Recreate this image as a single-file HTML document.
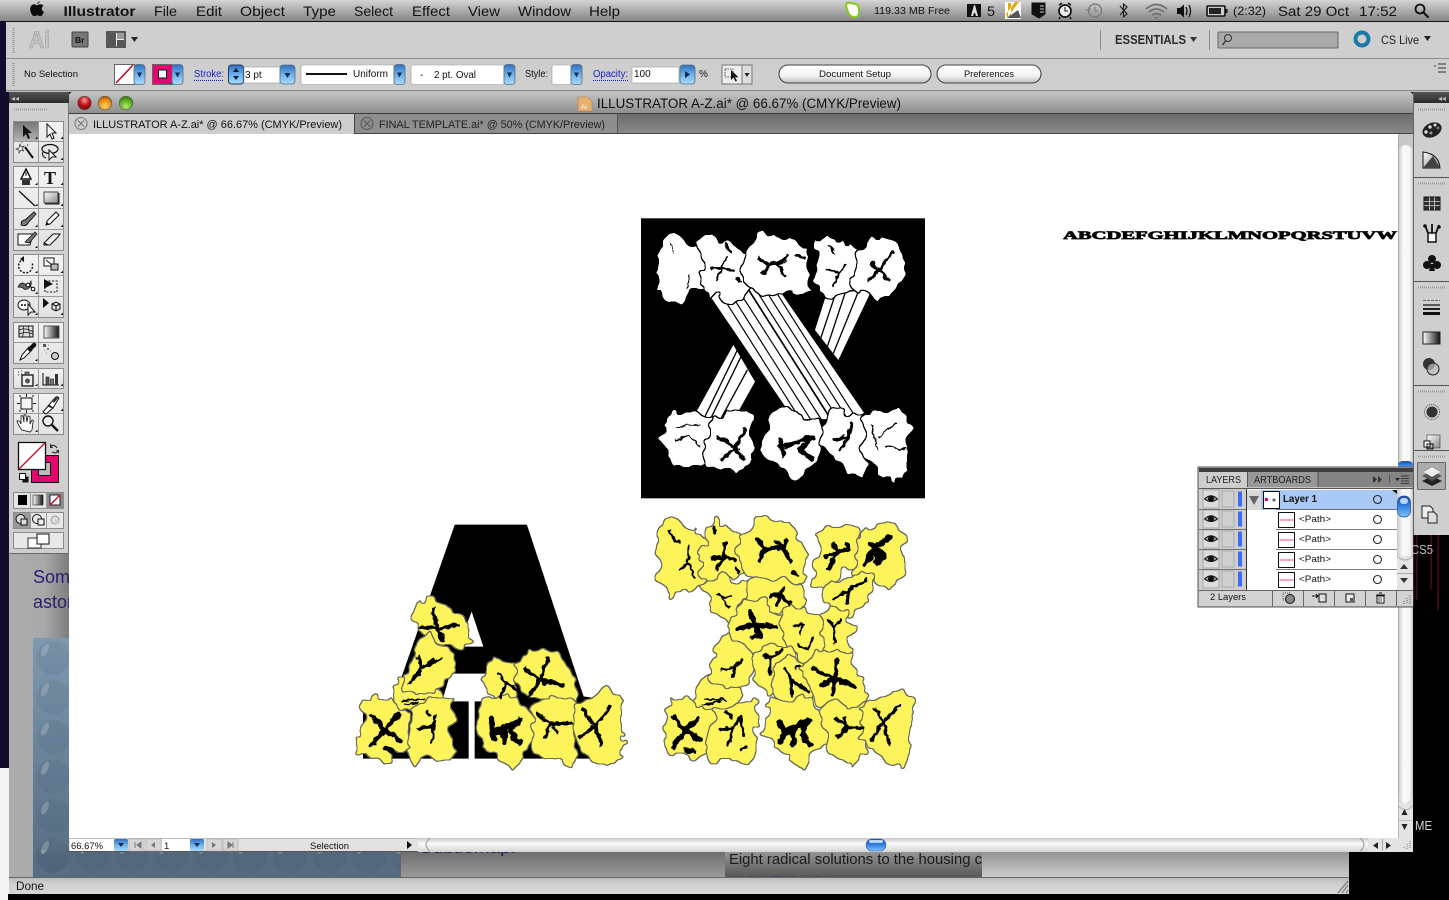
<!DOCTYPE html>
<html><head><meta charset="utf-8"><title>Illustrator</title>
<style>
html,body{margin:0;padding:0;background:#000;overflow:hidden}
svg{display:block;position:absolute;left:0;top:0}
text{font-family:"Liberation Sans",sans-serif;fill:#111}
path[filter]{stroke:#000;stroke-width:12;stroke-linejoin:round}
</style></head><body>
<svg width="1449" height="900" viewBox="0 0 1449 900" xmlns="http://www.w3.org/2000/svg">
<defs>
<linearGradient id="mb" x1="0" y1="0" x2="0" y2="1"><stop offset="0" stop-color="#d4d4d4"/><stop offset="1" stop-color="#858585"/></linearGradient>
<linearGradient id="tb" x1="0" y1="0" x2="0" y2="1"><stop offset="0" stop-color="#c4c4c4"/><stop offset="1" stop-color="#8e8e8e"/></linearGradient>
<linearGradient id="tb2" x1="0" y1="0" x2="0" y2="1"><stop offset="0" stop-color="#6c6c6c"/><stop offset="1" stop-color="#8a8a8a"/></linearGradient>
<linearGradient id="bl" x1="0" y1="0" x2="0" y2="1"><stop offset="0" stop-color="#2f6fc0"/><stop offset=".5" stop-color="#6fb0ea"/><stop offset="1" stop-color="#a6dcfb"/></linearGradient>
<linearGradient id="blt" x1="0" y1="0" x2="0" y2="1"><stop offset="0" stop-color="#1e4f9c"/><stop offset=".45" stop-color="#2f7ae0"/><stop offset="1" stop-color="#7fc4fb"/></linearGradient>
<linearGradient id="sb" x1="0" y1="0" x2="1" y2="0"><stop offset="0" stop-color="#c6c6c6"/><stop offset=".35" stop-color="#fafafa"/><stop offset=".8" stop-color="#f4f4f4"/><stop offset="1" stop-color="#c6c6c6"/></linearGradient>
<linearGradient id="sh" x1="0" y1="0" x2="0" y2="1"><stop offset="0" stop-color="#c6c6c6"/><stop offset=".4" stop-color="#fafafa"/><stop offset="1" stop-color="#d4d4d4"/></linearGradient>
<linearGradient id="btn" x1="0" y1="0" x2="0" y2="1"><stop offset="0" stop-color="#fff"/><stop offset=".6" stop-color="#f2f2f2"/><stop offset="1" stop-color="#bdbdbd"/></linearGradient>
<linearGradient id="grad" x1="0" y1="0" x2="1" y2="0"><stop offset="0" stop-color="#fff"/><stop offset="1" stop-color="#111"/></linearGradient>
<linearGradient id="grad2" x1="0" y1="0" x2="1" y2="1"><stop offset="0" stop-color="#fff"/><stop offset="1" stop-color="#888"/></linearGradient>
<linearGradient id="pg" x1="0" y1="0" x2="1" y2="0"><stop offset="0" stop-color="#adadad"/><stop offset=".6" stop-color="#a8a8a8"/><stop offset="1" stop-color="#7d7d7d"/></linearGradient>
<linearGradient id="im" x1="0" y1="0" x2="0" y2="1"><stop offset="0" stop-color="#7f98ae"/><stop offset=".4" stop-color="#6d879d"/><stop offset="1" stop-color="#566b80"/></linearGradient>
<linearGradient id="pgb" x1="0" y1="0" x2="0" y2="1"><stop offset="0" stop-color="#6a6a6a"/><stop offset="1" stop-color="#9c9c9c"/></linearGradient>
<linearGradient id="pgd" x1="0" y1="0" x2="0" y2="1"><stop offset="0" stop-color="#999"/><stop offset="1" stop-color="#555"/></linearGradient>
<linearGradient id="pgc" x1="0" y1="0" x2="0" y2="1"><stop offset="0" stop-color="#8e8e8e"/><stop offset="1" stop-color="#cfcfcf"/></linearGradient>
<linearGradient id="don" x1="0" y1="0" x2="0" y2="1"><stop offset="0" stop-color="#b8b8b8"/><stop offset=".4" stop-color="#cfcfcf"/><stop offset="1" stop-color="#d6d6d6"/></linearGradient>
<linearGradient id="tool" x1="0" y1="0" x2="0" y2="1"><stop offset="0" stop-color="#f2f2f2"/><stop offset="1" stop-color="#e2e2e2"/></linearGradient>
<linearGradient id="sel" x1="0" y1="0" x2="0" y2="1"><stop offset="0" stop-color="#777"/><stop offset="1" stop-color="#b4b4b4"/></linearGradient>
<linearGradient id="dk" x1="0" y1="0" x2="0" y2="1"><stop offset="0" stop-color="#555"/><stop offset="1" stop-color="#2a2a2a"/></linearGradient>
<radialGradient id="rr" cx=".5" cy=".3" r=".7"><stop offset="0" stop-color="#f4a0a0"/><stop offset=".5" stop-color="#c8141c"/><stop offset="1" stop-color="#6a0a0a"/></radialGradient>
<radialGradient id="ry" cx=".5" cy=".75" r=".8"><stop offset="0" stop-color="#ffd860"/><stop offset=".6" stop-color="#e88a10"/><stop offset="1" stop-color="#9a5205"/></radialGradient>
<radialGradient id="rg" cx=".5" cy=".75" r=".8"><stop offset="0" stop-color="#b4ec70"/><stop offset=".6" stop-color="#58a820"/><stop offset="1" stop-color="#2e6a0a"/></radialGradient>
<pattern id="drops" x="33" y="638" width="39.5" height="39.5" patternUnits="userSpaceOnUse"><circle cx="20" cy="20" r="17" fill="#2e4358" opacity=".1"/><ellipse cx="12" cy="12" rx="3" ry="7" fill="#b9c8d4" opacity=".35" transform="rotate(25 12 12)"/></pattern>
<filter id="yb" x="-25%" y="-25%" width="150%" height="150%" color-interpolation-filters="sRGB"><feTurbulence type="fractalNoise" baseFrequency=".028" numOctaves="2" seed="4" result="n"/><feDisplacementMap in="SourceAlpha" in2="n" scale="48" xChannelSelector="R" yChannelSelector="G"/><feGaussianBlur stdDeviation="4"/><feComponentTransfer result="s"><feFuncA type="linear" slope="14" intercept="-6.5"/></feComponentTransfer><feFlood flood-color="#6a6a5c"/><feComposite in2="s" operator="in" result="g"/><feMorphology in="s" operator="erode" radius="2.6" result="e"/><feFlood flood-color="#fdf45c"/><feComposite in2="e" operator="in" result="y"/><feMerge><feMergeNode in="g"/><feMergeNode in="y"/></feMerge></filter>
<filter id="wb" x="-25%" y="-25%" width="150%" height="150%" color-interpolation-filters="sRGB"><feTurbulence type="fractalNoise" baseFrequency=".028" numOctaves="2" seed="9" result="n"/><feDisplacementMap in="SourceAlpha" in2="n" scale="48" xChannelSelector="R" yChannelSelector="G"/><feGaussianBlur stdDeviation="4"/><feComponentTransfer result="s"><feFuncA type="linear" slope="14" intercept="-6.5"/></feComponentTransfer><feFlood flood-color="#000"/><feComposite in2="s" operator="in" result="g"/><feMorphology in="s" operator="erode" radius="2.4" result="e"/><feFlood flood-color="#fff"/><feComposite in2="e" operator="in" result="y"/><feMerge><feMergeNode in="g"/><feMergeNode in="y"/></feMerge></filter>
<filter id="st" x="-15%" y="-15%" width="130%" height="130%" color-interpolation-filters="sRGB"><feTurbulence type="fractalNoise" baseFrequency=".05" numOctaves="2" seed="2" result="n"/><feDisplacementMap in="SourceGraphic" in2="n" scale="18" xChannelSelector="R" yChannelSelector="G"/></filter>
<g id="dd"><rect x="0" y="0" width="11" height="20" rx="3" fill="url(#bl)" stroke="#5a6c80" stroke-width=".8"/><path d="M3,8h5l-2.500,5z" fill="#0a2a50"/></g>
<g id="eye"><rect x="0" y="0" width="16" height="18" fill="#dcdcdc" stroke="#888" stroke-width=".6"/><path d="M1.500,9 Q8,2.500 14.500,9 Q8,14 1.500,9Z" fill="#999" stroke="#111" stroke-width="1"/><circle cx="8" cy="8.600" r="3" fill="#111"/><rect x="19" y="1" width="12" height="16" fill="#cfcfcf" stroke="#9a9a9a" stroke-width=".7"/><rect x="35" y="1.500" width="4" height="15" fill="#3c6cf5"/></g>
<g id="pth"><rect x="0" y="0" width="16" height="15" fill="#fff" stroke="#111"/><path d="M1,7.500h14" stroke="#f47ab0" stroke-width="1.400"/></g>
</defs>

<!-- desktop -->
<rect width="1449" height="900" fill="#000"/>
<rect x="0" y="0" width="9" height="768" fill="#140a2c"/>
<rect x="0" y="768" width="9" height="132" fill="#f4f4f4"/>
<path d="M1417,535V600M1431,535V590M1438,535V610" stroke="#7a1024" stroke-width="1"/>
<text x="1411" y="554" font-size="12.500" style="fill:#bdbdbd" textLength="22" lengthAdjust="spacingAndGlyphs">CS5</text>
<text x="1415" y="830" font-size="12.500" style="fill:#d6d6d6" textLength="17" lengthAdjust="spacingAndGlyphs">ME</text>

<!-- browser page behind -->
<rect x="9" y="540" width="60" height="340" fill="url(#pg)"/>
<text x="33" y="583" font-size="18" style="fill:#2b1c70">Som</text>
<text x="33" y="608" font-size="18" style="fill:#2b1c70">astor</text>
<rect x="33" y="638" width="36" height="240" fill="url(#im)"/>
<rect x="33" y="638" width="36" height="240" fill="url(#drops)"/>
<rect x="69" y="850" width="332" height="28" fill="#566b80"/>
<rect x="33" y="850" width="368" height="28" fill="url(#drops)"/>
<rect x="401" y="850" width="324" height="28" fill="url(#pgb)"/>
<rect x="725" y="850" width="258" height="28" fill="url(#pgd)"/>
<rect x="982" y="850" width="367" height="28" fill="url(#pgc)"/>
<text x="420" y="853" font-size="14" style="fill:#16204c" textLength="96" lengthAdjust="spacingAndGlyphs">Subtlemap.</text>
<text x="729" y="864" font-size="14.500" style="fill:#1a1a1a" textLength="253" lengthAdjust="spacingAndGlyphs">Eight radical solutions to the housing c</text>
<text x="733" y="885" font-size="12" style="fill:#1c3c80" textLength="100" lengthAdjust="spacingAndGlyphs">UQ VT Q.. Q.l</text>
<rect x="9" y="877" width="1340" height="17" fill="url(#don)"/>
<rect x="9" y="877" width="1340" height="1" fill="#666"/>
<text x="16" y="890" font-size="11.500" textLength="28" lengthAdjust="spacingAndGlyphs">Done</text>
<path d="M1338,893L1348,881M1342,893L1348,885M1346,893L1348,890" stroke="#666" stroke-width="1"/>
<rect x="0" y="894" width="1349" height="6" fill="#000"/><rect x="0" y="894" width="8" height="6" fill="#f4f4f4"/>

<!-- menu bar -->
<rect x="0" y="0" width="1449" height="21" fill="url(#mb)"/>
<rect x="0" y="21" width="1449" height="1" fill="#111"/>
<path d="M37,3.500c1,-1 2,-1.800 2.600,-2.600c.2,1.400 -.9,2.800 -2.600,2.900zM36.500,5.200c1.400,0 2.300,-1 4,-1c1.200,0 2.300,.6 3,1.600c-2.600,1.600 -2.100,5 .5,6.100c-.8,2 -2.100,4.300 -3.600,4.300c-1.200,0 -1.700,-.8 -3.100,-.8c-1.400,0 -1.900,.8 -3.100,.8c-1.900,0 -4,-3.900 -4,-7c0,-3.100 2,-5 3.900,-5c1.400,0 2,1 2.400,1z" fill="#0c0c0c"/>
<text x="63.500" y="16" font-size="14" font-weight="700" textLength="72" lengthAdjust="spacingAndGlyphs">Illustrator</text>
<text x="154" y="16" font-size="14" textLength="23" lengthAdjust="spacingAndGlyphs">File</text>
<text x="196" y="16" font-size="14" textLength="26" lengthAdjust="spacingAndGlyphs">Edit</text>
<text x="240" y="16" font-size="14" textLength="45" lengthAdjust="spacingAndGlyphs">Object</text>
<text x="303" y="16" font-size="14" textLength="33" lengthAdjust="spacingAndGlyphs">Type</text>
<text x="354" y="16" font-size="14" textLength="39" lengthAdjust="spacingAndGlyphs">Select</text>
<text x="412" y="16" font-size="14" textLength="38" lengthAdjust="spacingAndGlyphs">Effect</text>
<text x="468" y="16" font-size="14" textLength="32" lengthAdjust="spacingAndGlyphs">View</text>
<text x="518" y="16" font-size="14" textLength="53" lengthAdjust="spacingAndGlyphs">Window</text>
<text x="589" y="16" font-size="14" textLength="31" lengthAdjust="spacingAndGlyphs">Help</text>
<path d="M847,3c3,-1 6,1 9,1c3,1 3,5 3,8c0,3 -2,6 -5,5c-3,0 -5,-2 -6,-5c-1,-3 -3,-7 -1,-9z" fill="#fff" stroke="#86c818" stroke-width="2"/>
<text x="874" y="14" font-size="10.500" textLength="76" lengthAdjust="spacingAndGlyphs">119.33 MB Free</text>
<rect x="967" y="4" width="14" height="13" fill="#111"/><path d="M974,5l-3,11h2l1,-3h1l1,3h2l-3,-11z" fill="#ddd"/>
<text x="987" y="16" font-size="14" textLength="8" lengthAdjust="spacingAndGlyphs">5</text>
<rect x="1005" y="2" width="16" height="17" fill="#fff"/><path d="M1007,18l12,-16h-4l-9,12zM1008,3h3v15h-3z" fill="#e8a810"/><path d="M1007,18h14l-3,-8z" fill="#555"/>
<path d="M1032,3h13v11l-6,4l-7,-4zM1038,3v14" fill="#111" stroke="#111"/><path d="M1040,6h4M1040,9h4M1040,12h4" stroke="#ccc"/>
<circle cx="1065" cy="11" r="6" fill="#eee" stroke="#111" stroke-width="1.700"/><path d="M1065,7v4h3" stroke="#111" fill="none"/><path d="M1059,5l3,-2M1071,5l-3,-2M1060,17l-1,2M1070,17l1,2" stroke="#111" stroke-width="1.500"/>
<circle cx="1095" cy="10.500" r="6.500" fill="none" stroke="#777" stroke-width="1.200"/><path d="M1095,6.500v4.500h3M1086,9l2.500,2l2,-2.500" fill="none" stroke="#777"/>
<path d="M1120,6l7,8l-3.500,3v-13l3.500,3l-7,8" fill="none" stroke="#222" stroke-width="1.200"/>
<path d="M1146,9q10,-9 21,0M1149,12q7,-6 15,0M1152,15q4,-3 9,0" fill="none" stroke="#6f6f6f" stroke-width="1.800"/><path d="M1154,17l2.500,2l2.500,-2z" fill="#6f6f6f"/>
<path d="M1177,8h3l4,-3.500v13l-4,-3.500h-3z" fill="#111"/><path d="M1186,7q2,4 0,8M1189,5q3,6 0,12" fill="none" stroke="#111" stroke-width="1.300"/>
<rect x="1207" y="6" width="18" height="10" rx="1" fill="#ccc" stroke="#111" stroke-width="1.600"/><rect x="1209" y="8" width="12" height="6" fill="#222"/><rect x="1225.500" y="9" width="2" height="4" fill="#111"/>
<text x="1233" y="15" font-size="12" textLength="33" lengthAdjust="spacingAndGlyphs">(2:32)</text>
<text x="1278" y="16" font-size="14" textLength="71" lengthAdjust="spacingAndGlyphs">Sat 29 Oct</text>
<text x="1359" y="16" font-size="14" textLength="38" lengthAdjust="spacingAndGlyphs">17:52</text>
<circle cx="1420" cy="9" r="4.500" fill="none" stroke="#111" stroke-width="1.800"/><path d="M1423.500,12.500l5,5" stroke="#111" stroke-width="2.200"/>

<!-- application bar + control -->
<rect x="6" y="22" width="1443" height="36" fill="#cfcfcf"/>
<rect x="6" y="58" width="1443" height="1" fill="#8d8d8d"/>
<rect x="6" y="59" width="1443" height="31" fill="#cecece"/>
<rect x="6" y="90" width="1443" height="1" fill="#8a8a8a"/>
<rect x="6" y="91" width="1443" height="1" fill="#bbb"/>
<path d="M13.500,28V54M13.500,63V86" stroke="#909090" stroke-dasharray="1 1" stroke-width="2"/>
<text x="29" y="48" font-size="24" font-weight="700" style="fill:#c2c2c2;stroke:#9a9a9a;stroke-width:.6" textLength="21" lengthAdjust="spacingAndGlyphs">Ai</text>
<rect x="72" y="32" width="16" height="15" rx="1" fill="#777" stroke="#444"/><text x="75" y="43" font-size="8.500" font-weight="700" style="fill:#111">Br</text>
<rect x="107" y="32" width="18" height="15" fill="#eee" stroke="#222" stroke-width="1.400"/><rect x="108" y="33" width="8" height="13" fill="#555"/><rect x="117" y="33" width="7" height="6" fill="#999"/><rect x="117" y="40" width="7" height="6" fill="#555"/>
<path d="M131,37h7l-3.500,5z" fill="#222"/>
<path d="M1100.500,30V50M1209.500,30V50" stroke="#8a8a8a"/>
<text x="1115" y="44" font-size="12.500" font-weight="700" style="fill:#2a2a2a" textLength="71" lengthAdjust="spacingAndGlyphs">ESSENTIALS</text>
<path d="M1190,37h7l-3.500,5z" fill="#333"/>
<rect x="1218" y="32" width="120" height="16" rx="1" fill="#aaa" stroke="#666"/>
<circle cx="1228" cy="38" r="3.500" fill="none" stroke="#333"/><path d="M1225.500,41l-3,4" stroke="#333" stroke-width="1.300"/>
<circle cx="1362" cy="39" r="6.500" fill="none" stroke="#1e78a8" stroke-width="4"/>
<text x="1381" y="44" font-size="12" style="fill:#222" textLength="38" lengthAdjust="spacingAndGlyphs">CS Live</text>
<path d="M1424,36h7l-3.500,5z" fill="#222"/>

<text x="24" y="77" font-size="9.500" style="fill:#111" textLength="54" lengthAdjust="spacingAndGlyphs">No Selection</text>
<rect x="114.500" y="64.500" width="20" height="20" fill="#fff" stroke="#666"/><path d="M116,83l17,-18" stroke="#c4122c" stroke-width="1.600"/>
<use href="#dd" transform="translate(134,64.500)"/>
<rect x="152.500" y="64.500" width="20" height="20" fill="#e2066f" stroke="#666"/><rect x="158.500" y="70" width="8" height="8" fill="#fff" stroke="#111"/>
<use href="#dd" transform="translate(172,64.500)"/>
<text x="194" y="77" font-size="10" style="fill:#1a22cc" textLength="30" lengthAdjust="spacingAndGlyphs">Stroke:</text><path d="M194,80.500h30" stroke="#1a22cc" stroke-dasharray="1 1"/>
<rect x="228.500" y="65" width="15" height="19" rx="3" fill="url(#bl)" stroke="#203a60"/><path d="M233,72h6l-3,-4zM233,76h6l-3,4z" fill="#0a1a30"/>
<rect x="244" y="67" width="36" height="16" fill="#fff" stroke="#999" stroke-width=".6"/><text x="245" y="78" font-size="10" style="fill:#111">3 pt</text>
<rect x="280" y="65" width="15" height="19" rx="3" fill="url(#bl)" stroke="#5a6c80" stroke-width=".8"/><path d="M284.500,73h6l-3,5z" fill="#0a2a50"/>
<rect x="301" y="65" width="93" height="19.500" rx="2" fill="#fff" stroke="#999" stroke-width=".6"/><path d="M306,74h41" stroke="#111" stroke-width="2"/>
<text x="353" y="77" font-size="10" textLength="35" lengthAdjust="spacingAndGlyphs">Uniform</text>
<use href="#dd" transform="translate(394,64.500)"/>
<rect x="411" y="65" width="93" height="19.500" rx="2" fill="#fff" stroke="#999" stroke-width=".6"/>
<text x="420" y="78" font-size="10">-</text><text x="434" y="78" font-size="10" textLength="42" lengthAdjust="spacingAndGlyphs">2 pt. Oval</text>
<use href="#dd" transform="translate(504,64.500)"/>
<text x="525" y="77" font-size="10" textLength="23" lengthAdjust="spacingAndGlyphs">Style:</text>
<rect x="552" y="65" width="19" height="19.500" rx="2" fill="#fff" stroke="#999" stroke-width=".6"/>
<use href="#dd" transform="translate(571,64.500)"/>
<text x="593" y="77" font-size="10" style="fill:#1a22cc" textLength="35" lengthAdjust="spacingAndGlyphs">Opacity:</text><path d="M593,80.500h35" stroke="#1a22cc" stroke-dasharray="1 1"/>
<rect x="632" y="67" width="47" height="16" fill="#fff" stroke="#999" stroke-width=".6"/><text x="634" y="77" font-size="10">100</text>
<rect x="680" y="65" width="15" height="19" rx="3" fill="url(#bl)" stroke="#5a6c80" stroke-width=".8"/><path d="M685,71v7l5,-3.500z" fill="#0a2a50"/>
<text x="699" y="77" font-size="10">%</text>
<rect x="722" y="65" width="20" height="19" fill="#eee" stroke="#777"/><rect x="725" y="69" width="8" height="8" fill="none" stroke="#555" stroke-dasharray="1.500 1"/><path d="M731,70l0,10l2.500,-2.500l2,4l1.500,-.8l-2,-3.500l3.500,0z" fill="#111"/>
<rect x="742" y="65" width="10" height="19" fill="#ddd" stroke="#777"/><path d="M744.500,73h5l-2.500,4z" fill="#222"/>
<rect x="779" y="65" width="152" height="18" rx="9" fill="url(#btn)" stroke="#444" stroke-width="1.100"/>
<text x="819" y="77" font-size="9.500" textLength="72" lengthAdjust="spacingAndGlyphs">Document Setup</text>
<rect x="937" y="65" width="104" height="18" rx="9" fill="url(#btn)" stroke="#444" stroke-width="1.100"/>
<text x="964" y="77" font-size="9.500" textLength="50" lengthAdjust="spacingAndGlyphs">Preferences</text>
<path d="M1434,66h2M1438,64h8M1438,68h8M1438,72h8" stroke="#333"/>

<!-- document window -->
<path d="M69,113V96q0,-4 4,-4H1409q4,0 4,4V113z" fill="url(#tb)"/>
<rect x="69" y="113" width="1344" height="1" fill="#3e3e3e"/>
<rect x="69" y="114" width="1344" height="20" fill="url(#tb2)"/>
<rect x="69" y="133" width="1344" height="1" fill="#444"/>
<circle cx="84.500" cy="103" r="6.800" fill="url(#rr)" stroke="#555" stroke-width=".6"/>
<circle cx="105" cy="103" r="6.800" fill="url(#ry)" stroke="#555" stroke-width=".6"/>
<circle cx="126" cy="103" r="6.800" fill="url(#rg)" stroke="#555" stroke-width=".6"/>
<path d="M578,97h9l5,4v10h-14z" fill="#e8b070" stroke="#b87e3e" stroke-width=".6"/><text x="581" y="109" font-size="6.500" style="fill:#fff">Ai</text>
<text x="597" y="108" font-size="13.500" style="fill:#111" textLength="304" lengthAdjust="spacingAndGlyphs">ILLUSTRATOR A-Z.ai* @ 66.67% (CMYK/Preview)</text>
<rect x="69" y="114" width="285" height="20" fill="#cdcdcd"/>
<rect x="354" y="114" width="1" height="20" fill="#444"/>
<rect x="355" y="114" width="262" height="19" fill="#8e8e8e"/>
<rect x="617" y="114" width="1" height="19" fill="#555"/>
<circle cx="81" cy="123.500" r="6" fill="#cdcdcd" stroke="#777"/><path d="M78,120.500l6,6M84,120.500l-6,6" stroke="#777"/>
<text x="93" y="128" font-size="11" textLength="249" lengthAdjust="spacingAndGlyphs">ILLUSTRATOR A-Z.ai* @ 66.67% (CMYK/Preview)</text>
<circle cx="367" cy="123.500" r="6" fill="#8e8e8e" stroke="#555"/><path d="M364,120.500l6,6M370,120.500l-6,6" stroke="#555"/>
<text x="379" y="128" font-size="11" style="fill:#222" textLength="226" lengthAdjust="spacingAndGlyphs">FINAL TEMPLATE.ai* @ 50% (CMYK/Preview)</text>

<rect x="69" y="134" width="1329" height="704" fill="#fff"/>
<!-- alphabet -->
<svg x="1063" y="225" width="335" height="20" viewBox="0 0 335 20">
<text x="0" y="14" font-size="12" font-weight="700" style="font-family:'Liberation Serif',serif;fill:#000;stroke:#000;stroke-width:.7" textLength="334" lengthAdjust="spacingAndGlyphs">ABCDEFGHIJKLMNOPQRSTUVW</text>
</svg>

<!-- black X panel -->
<g transform="translate(630,210) scale(.33333)">
<rect x="33" y="25" width="852" height="840" fill="#000"/>
<g>
<path d="M590,250L725,240L625,450L555,360Z" fill="#fff"/>
<path d="M310,405L375,515L305,640L180,640Z" fill="#fff"/>
<path d="M617,250L572,385M645,250L592,410M685,245L610,430M333,440L235,640M352,480L265,640M322,420L215,640" stroke="#000" stroke-width="4" fill="none"/>
<path d="M225,240L440,225L720,630L490,630Z" fill="#fff" stroke="#000" stroke-width="5"/>
<path d="M265,240L512,630M295,240L543,630M325,240L575,630M353,235L604,630M375,235L626,630M403,235L655,630M428,230L682,630" stroke="#000" stroke-width="3.500"/>
<path d="M353,235L604,630" stroke="#000" stroke-width="5"/>
</g>
<path filter="url(#wb)" d="M90,100L125,68L165,85L185,125L222,115L225,175L232,235L180,240L150,278L120,268L82,245L100,210L85,160Z"/>
<path filter="url(#wb)" d="M212,105L240,70L270,100L295,92L325,125L345,140L345,170L365,210L335,268L290,274L270,248L235,258L212,225L222,180Z"/>
<path filter="url(#wb)" d="M338,140L365,105L395,65L422,72L450,98L500,92L533,120L528,160L533,205L528,242L490,248L450,243L415,258L385,248L348,228L342,180Z"/>
<path filter="url(#wb)" d="M562,98L595,82L625,102L662,108L684,130L684,170L674,243L625,248L600,268L568,238L562,200L572,160Z"/>
<path filter="url(#wb)" d="M678,128L720,98L745,82L803,98L818,150L828,190L793,243L745,268L715,238L668,243L678,180Z"/>
<path filter="url(#wb)" d="M107,640L160,602L205,617L250,635L245,700L238,763L175,773L135,763L97,690Z"/>
<path filter="url(#wb)" d="M243,635L300,607L345,602L378,625L358,680L363,753L320,788L275,763L232,773L232,700Z"/>
<path filter="url(#wb)" d="M412,610L450,602L500,612L540,627L588,650L583,703L555,748L525,773L500,808L470,773L435,763L387,720L417,660Z"/>
<path filter="url(#wb)" d="M582,640L620,597L655,622L708,612L718,660L708,720L698,793L655,783L620,748L577,703Z"/>
<path filter="url(#wb)" d="M702,620L750,607L800,587L838,640L828,700L838,783L790,813L750,793L702,733L712,660Z"/>
<g filter="url(#st)" fill="none" stroke="#000" stroke-linecap="round" stroke-linejoin="round" stroke-width="7">
<path d="M122,100L135,135M178,190L172,235" stroke-width="3"/>
<path d="M245,175L275,170L290,140M275,170L260,210M275,170L310,185M320,205L330,215M285,100L300,125" stroke-width="7"/>
<path d="M390,145L415,165L400,190M415,165L460,155L470,135M445,165L465,195M500,135L520,145" stroke-width="10"/>
<path d="M590,175L625,190L645,165M625,190L610,230M600,110L615,130" stroke-width="7"/>
<path d="M720,210L745,180L725,160M745,180L790,125M745,180L775,210" stroke-width="10"/>
<path d="M140,650L205,645M135,690L175,675L210,710" stroke-width="4"/>
<path d="M265,680L315,715L345,660M315,715L275,750M315,715L340,745" stroke-width="10"/>
<path d="M450,690L460,735M460,710L545,680L510,720L545,745" stroke-width="14"/>
<path d="M615,690L655,680L630,720M655,680L665,640" stroke-width="10"/>
<path d="M725,650L745,720M745,680L800,640M770,710L830,720" stroke-width="4"/>
</g>
</g>

<!-- letter A -->
<g transform="translate(350,510) scale(.33333)">
<path d="M315,45L530,45L700,560L800,575L800,745L375,745L375,575L445,575L415,490L300,490L275,575L355,575L355,745L40,745L40,575L130,575Z" fill="#000" stroke="#000" stroke-width="2" stroke-linejoin="round"/>
<path d="M365,305L400,410L325,410Z" fill="#fff"/>
<path filter="url(#yb)" d="M185,335L210,285L250,265L285,285L300,305L335,315L355,345L345,375L368,397L320,408L275,403L240,378L200,360Z"/>
<path filter="url(#yb)" d="M130,575L145,505L168,498L172,530L210,545L283,545L278,578L215,595L140,595Z"/>
<path filter="url(#yb)" d="M203,395L240,372L268,410L313,455L298,503L255,543L205,548L168,538L163,490L198,440Z"/>
<path filter="url(#yb)" d="M187,600L240,567L308,567L303,700L308,733L270,753L235,733L190,753L167,720L182,660Z"/>
<path filter="url(#yb)" d="M40,572L90,567L130,587L173,605L168,660L178,713L130,728L115,758L60,733L22,728L42,660Z"/>
<path filter="url(#yb)" d="M430,447L503,452L503,480L493,563L450,568L420,543L402,505Z"/>
<path filter="url(#yb)" d="M497,460L545,422L600,427L643,450L678,520L673,583L620,568L580,563L540,553L497,510Z"/>
<path filter="url(#yb)" d="M387,580L440,557L500,567L543,610L548,680L523,723L490,778L440,738L400,713L382,640Z"/>
<path filter="url(#yb)" d="M552,590L590,562L625,572L673,577L693,610L668,665L673,763L630,753L600,738L557,723L542,650Z"/>
<path filter="url(#yb)" d="M677,590L720,567L765,537L818,570L803,620L818,680L808,753L760,763L700,723L672,665Z"/>
<g filter="url(#st)" fill="none" stroke="#000" stroke-linecap="round" stroke-linejoin="round" stroke-width="9">
<path d="M215,350L260,355L250,295M260,355L325,345M260,355L280,390" stroke-width="11"/>
<path d="M180,520L215,475L275,445M215,475L255,450M205,440L215,475" stroke-width="9"/>
<path d="M155,572L225,570M165,585L205,578" stroke-width="5"/>
<path d="M65,615L105,660L145,615M105,660L150,690M105,660L65,705M105,715L125,720" stroke-width="14"/>
<path d="M205,655L250,650L255,620L245,700M230,605L240,615" stroke-width="9"/>
<path d="M445,490L470,520L450,560M470,520L505,545" stroke-width="8"/>
<path d="M525,475L570,510L595,445M570,510L640,525M570,510L540,555M555,500L585,520" stroke-width="11"/>
<path d="M425,625L430,690M430,670L510,630L480,665L510,700M460,650L465,700" stroke-width="17"/>
<path d="M560,610L600,640L585,680M600,640L665,640M610,650L620,670" stroke-width="10"/>
<path d="M700,600L735,650L755,705M735,650L780,590M735,650L690,680" stroke-width="11"/>
</g>
</g>

<!-- letter X yellow -->
<g transform="translate(645,510) scale(.33333)">
<path filter="url(#yb)" d="M40,70L65,32L100,32L135,58L168,85L193,90L173,150L188,218L150,233L110,238L85,253L50,228L32,205L52,165L37,120Z"/>
<path filter="url(#yb)" d="M183,65L215,32L250,68L288,72L288,120L308,165L298,193L240,208L200,228L172,190L167,150L187,95Z"/>
<path filter="url(#yb)" d="M287,80L320,67L345,27L375,32L395,42L430,42L458,75L468,110L483,150L473,185L473,223L430,218L405,203L375,223L345,208L310,193L297,170L282,120Z"/>
<path filter="url(#yb)" d="M522,65L560,52L590,62L610,47L643,70L638,110L628,168L590,178L560,228L515,228L497,205L517,170L522,130Z"/>
<path filter="url(#yb)" d="M642,80L680,67L700,42L750,47L778,75L763,120L773,140L773,193L730,228L690,198L627,188L637,130Z"/>
<path filter="url(#yb)" d="M537,240L590,212L630,187L683,197L683,235L640,303L615,323L570,293L532,265Z"/>
<path filter="url(#yb)" d="M177,230L215,207L240,197L270,222L313,217L318,255L270,283L255,335L215,308L202,275Z"/>
<path filter="url(#yb)" d="M317,210L345,207L375,222L410,202L473,235L478,283L415,298L385,303L350,283L312,265Z"/>
<path filter="url(#yb)" d="M272,295L305,272L345,272L365,302L413,320L423,380L428,408L345,418L320,433L277,405L252,345Z"/>
<path filter="url(#yb)" d="M412,305L440,287L480,297L523,320L548,370L548,423L510,428L470,453L432,410L417,380Z"/>
<path filter="url(#yb)" d="M522,320L565,292L608,305L603,345L633,355L603,380L608,428L575,433L542,423L542,370Z"/>
<path filter="url(#yb)" d="M232,385L260,377L283,405L323,430L333,460L303,513L275,533L230,548L192,538L187,510L212,440Z"/>
<path filter="url(#yb)" d="M332,425L390,402L433,407L438,440L393,483L383,558L332,508L327,460Z"/>
<path filter="url(#yb)" d="M397,460L430,437L473,457L478,480L503,540L498,578L460,568L420,593L382,530L382,490Z"/>
<path filter="url(#yb)" d="M477,455L520,427L570,427L613,437L633,490L658,530L653,588L605,603L565,573L530,588L502,545L472,480Z"/>
<path filter="url(#yb)" d="M167,510L185,502L193,527L230,542L293,537L298,555L270,583L210,603L160,593L147,565L162,540Z"/>
<path filter="url(#yb)" d="M57,590L95,572L140,572L165,597L208,602L208,650L198,723L150,753L115,733L75,728L57,690L67,640Z"/>
<path filter="url(#yb)" d="M212,600L250,587L295,587L333,572L333,630L328,700L333,743L290,763L250,738L215,758L187,730L197,690L207,650Z"/>
<path filter="url(#yb)" d="M367,590L390,567L420,587L465,562L500,567L533,620L558,680L510,723L490,743L475,778L440,748L405,723L352,670L372,640Z"/>
<path filter="url(#yb)" d="M527,600L565,562L610,597L663,587L668,640L653,690L658,723L620,768L590,738L555,723L552,680L532,640Z"/>
<path filter="url(#yb)" d="M652,600L680,572L745,542L803,570L793,650L793,700L783,768L730,753L680,713L647,690Z"/>
<g filter="url(#st)" fill="none" stroke="#000" stroke-linecap="round" stroke-linejoin="round" stroke-width="8">
<path d="M75,60Q83,90 103,97M133,110L130,155M130,155L105,180M130,155L147,198" stroke-width="7"/>
<path d="M210,50L208,70M200,145L235,140L240,100M235,140L265,150M235,140L215,180M272,172L282,187" stroke-width="11"/>
<path d="M335,90L360,115L345,150M360,115L415,115L395,95M415,115L425,90M415,115L435,155M445,187L458,195" stroke-width="12"/>
<path d="M540,140L575,125L565,100M575,125L610,120L605,100M575,125L550,180" stroke-width="11"/>
<path d="M660,165L690,110L735,80M680,105L720,140L690,150M690,110L700,155" stroke-width="16"/>
<path d="M570,265L605,245L665,210M610,240L605,280" stroke-width="9"/>
<path d="M220,250L250,290M235,265L258,258" stroke-width="6"/>
<path d="M380,258L405,255L435,280M405,255L415,235M405,255L395,285" stroke-width="11"/>
<path d="M280,355L330,345L315,305M330,345L395,350M330,345L345,375L320,385" stroke-width="15"/>
<path d="M448,345L478,345L465,372M458,402L490,420L500,385" stroke-width="7"/>
<path d="M550,330L570,350L585,330M570,350L570,400" stroke-width="8"/>
<path d="M230,480L270,470L295,450M270,470L262,500" stroke-width="8"/>
<path d="M355,435L375,445L410,420M375,445L375,495" stroke-width="8"/>
<path d="M420,475L440,510L440,560M440,510L490,545M450,470L465,470" stroke-width="8"/>
<path d="M505,478L570,505L575,450M570,505L625,528M570,505L565,555M570,505L530,525" stroke-width="13"/>
<path d="M180,570L240,570M178,585L225,575" stroke-width="5"/>
<path d="M85,620L120,660L160,625M120,660L165,690M120,660L85,710M125,720L145,722" stroke-width="14"/>
<path d="M225,660L265,655L285,620L295,680M265,655L250,710M245,605L260,620M290,715L300,710" stroke-width="9"/>
<path d="M405,640L420,670L405,695M420,670L490,630L470,670L495,705M445,665L445,700" stroke-width="18"/>
<path d="M575,625L605,650L580,680M605,650L650,655M605,650L600,625" stroke-width="11"/>
<path d="M690,595L715,635L735,705M715,635L760,590M715,635L680,690" stroke-width="9"/>
</g>
</g>

<!-- vertical scrollbar -->
<rect x="1398" y="134" width="15" height="704" fill="url(#sb)"/>
<path d="M1398,134h15v16q-7,-10 -15,0z" fill="#c8c8c8"/>
<path d="M1398,795q7,16 15,0v23h-15z" fill="#dcdcdc"/>
<rect x="1398" y="803" width="15" height="35" fill="#e4e4e4"/>
<path d="M1398,805h0q7,10 15,0" fill="none" stroke="#aaa"/>
<path d="M1398.500,820.500h14M1398.500,135V838" stroke="#999" stroke-width=".6" fill="none"/>
<path d="M1401.500,815l3,-6l3,6z M1401.500,824l3,6l3,-6z" fill="#222"/>
<rect x="1398" y="461" width="15" height="8" rx="5" fill="url(#blt)"/>

<!-- status bar -->
<rect x="69" y="838" width="1344" height="14" fill="#e2e2e2"/>
<rect x="69" y="851" width="1344" height="1" fill="#555"/>
<rect x="69" y="838" width="1344" height="1" fill="#bbb"/>
<rect x="70" y="839" width="44" height="12" fill="#fff"/><text x="71" y="849" font-size="9.500" textLength="32" lengthAdjust="spacingAndGlyphs">66.67%</text>
<rect x="114" y="839" width="14" height="12" rx="2" fill="url(#bl)"/><path d="M118,843h6l-3,4z" fill="#0a2a50"/>
<rect x="129" y="839" width="15" height="12" fill="#d6d6d6" stroke="#aaa" stroke-width=".6"/><path d="M135,842v6M141,842l-4,3l4,3z" fill="#777" stroke="#777"/>
<rect x="146" y="839" width="15" height="12" fill="#d6d6d6" stroke="#aaa" stroke-width=".6"/><path d="M155,842l-4,3l4,3z" fill="#777"/>
<rect x="162" y="839" width="28" height="12" fill="#fff"/><text x="164" y="849" font-size="9.500">1</text>
<rect x="190" y="839" width="14" height="12" rx="2" fill="url(#bl)"/><path d="M194,843h6l-3,4z" fill="#0a2a50"/>
<rect x="207" y="839" width="15" height="12" fill="#d6d6d6" stroke="#aaa" stroke-width=".6"/><path d="M212,842l4,3l-4,3z" fill="#777"/>
<rect x="223" y="839" width="15" height="12" fill="#d6d6d6" stroke="#aaa" stroke-width=".6"/><path d="M233,842v6M228,842l4,3l-4,3z" fill="#777" stroke="#777"/>
<text x="310" y="849" font-size="9.500" textLength="39" lengthAdjust="spacingAndGlyphs">Selection</text>
<path d="M407,841l5,4l-5,4z" fill="#111"/>
<rect x="418" y="838" width="950" height="14" fill="url(#sh)"/>
<path d="M430,838q-8,7 0,13M1360,838q8,7 0,13" fill="none" stroke="#999"/>
<rect x="866" y="839" width="20" height="12" rx="6" fill="url(#blt)" stroke="#3a66a8" stroke-width=".6"/><rect x="869" y="840" width="14" height="3" rx="1.500" fill="#b8d6f6"/>
<rect x="1368" y="838" width="30" height="14" fill="#e4e4e4"/>
<path d="M1378,842l-5,3.500l5,3.500zM1386,842l5,3.500l-5,3.500z" fill="#222"/><path d="M1382.500,839v12" stroke="#aaa"/>
<rect x="1398" y="838" width="15" height="14" fill="#e2e2e2"/>
<path d="M1410,841v8M1407,844v5M1404,847v2" stroke="#777" stroke-dasharray="1 1"/>

<!-- tools panel -->
<rect x="9" y="92" width="60" height="11" fill="url(#dk)"/>
<text x="11" y="101" font-size="8" style="fill:#bbb">◂◂</text>
<rect x="9" y="103" width="60" height="450" fill="#cfcfcf"/>
<rect x="68" y="103" width="1" height="450" fill="#777"/>
<rect x="9" y="553" width="60" height="1" fill="#666"/>
<path d="M14,109.500h33" stroke="#9a9a9a" stroke-width="2" stroke-dasharray="1 1"/>

<g fill="url(#tool)" stroke="#8c8c8c" stroke-width="1">
<rect x="13.500" y="121.500" width="50" height="41"/>
<rect x="13.500" y="166.500" width="50" height="84"/>
<rect x="13.500" y="254.500" width="50" height="63"/>
<rect x="13.500" y="322.500" width="50" height="41"/>
<rect x="13.500" y="368.500" width="50" height="20"/>
<rect x="13.500" y="393.500" width="50" height="41"/>
</g>
<rect x="14" y="122" width="24.500" height="19.500" fill="url(#sel)"/>
<path d="M38.500,121V162M38.500,166V250M38.500,254V317M38.500,322V363M38.500,368V388M38.500,393V434M13,141.500H64M13,187.500H64M13,208.500H64M13,229.500H64M13,275.500H64M13,296.500H64M13,342.500H64M13,413.500H64" stroke="#9a9a9a" stroke-width="1"/>
<path fill="#111" d="M35,139h2.500v-2.500zM60.500,139h2.500v-2.500zM60.500,160h2.500v-2.500zM35,185h2.500v-2.500zM60.500,185h2.500v-2.500zM35,206h2.500v-2.500zM60.500,206h2.500v-2.500zM35,227h2.500v-2.500zM60.500,227h2.500v-2.500zM35,248h2.500v-2.500zM35,273h2.500v-2.500zM60.500,273h2.500v-2.500zM35,294h2.500v-2.500zM35,315h2.500v-2.500zM60.500,315h2.500v-2.500zM35,361h2.500v-2.500zM35,386h2.500v-2.500zM60.500,386h2.500v-2.500zM60.500,411h2.500v-2.500zM35,432h2.500v-2.500z"/>
<!-- icon glyphs -->
<path d="M23,125V137L26,134L28,139L30,138L28,133H32Z" fill="#111"/>
<path d="M47,124V137L50,134L52,139L54,138L52,133H56Z" fill="#fff" stroke="#111"/>
<path d="M25,147L33,158" stroke="#111" stroke-width="2"/><path d="M20,144l1,3l3,-1l-2,3l2,2l-3,-1l-2,3v-3l-3,-1l3,-1zM27,146l1,-2M22,143v-1" fill="#fff" stroke="#333" stroke-width=".7"/>
<ellipse cx="50" cy="149" rx="8" ry="4.500" fill="none" stroke="#111" stroke-width="1.200"/><path d="M43,152q-2,4 3,6" fill="none" stroke="#111"/><path d="M49,150V160L52,157L56,157Z" fill="#fff" stroke="#111"/>
<path d="M26,169L31,179H21Z" fill="#fff" stroke="#111" stroke-width="1.400"/><path d="M26,172v4" stroke="#111"/><rect x="22" y="180" width="8" height="5" fill="#333"/>
<text x="44" y="184" font-size="18" font-weight="700" style="font-family:'Liberation Serif',serif;fill:#111">T</text>
<path d="M19,191L35,206" stroke="#111" stroke-width="1.300"/>
<rect x="44" y="192" width="14" height="11" fill="url(#grad2)" stroke="#444"/><path d="M59,193v11h-14" stroke="#111" fill="none"/>
<path d="M21,225q0,-5 4,-5l9,-8l2,2l-8,9q-2,4 -7,2z" fill="#777" stroke="#111" stroke-width=".9"/>
<path d="M46,225l1,-4l9,-9l3,3l-9,9z" fill="#fff" stroke="#111"/><path d="M46,225l1,-3l2,2z" fill="#111"/>
<path d="M18,234h15l-3,11h-12z" fill="#fff" stroke="#111"/><path d="M25,242l10,-10l2,2l-8,9z" fill="#777" stroke="#111" stroke-width=".8"/>
<path d="M44,243l9,-9h7l-2,3l-8,8h-6z" fill="#eee" stroke="#111"/><path d="M44,243l4,2" stroke="#111"/>
<path d="M24,259a7,7 0 1 0 8,4" fill="none" stroke="#111" stroke-width="1.400" stroke-dasharray="2 1.500"/><path d="M24,256v6l-4,-3z" fill="#111"/>
<rect x="44" y="258" width="10" height="8" fill="#fff" stroke="#111"/><rect x="51" y="264" width="7" height="6" fill="#bbb" stroke="#111"/><path d="M46,260l6,5" stroke="#111"/>
<path d="M18,287q3,-6 7,-3q4,2 6,-3q1,5 -2,7q-4,3 -6,0q-2,-1 -5,-1z" fill="#666" stroke="#111" stroke-width=".7"/><path d="M27,283l8,8" stroke="#111"/><circle cx="33" cy="289" r="1.800" fill="#fff" stroke="#111"/><circle cx="28" cy="285" r="1.800" fill="#fff" stroke="#111"/>
<rect x="45" y="281" width="12" height="11" fill="none" stroke="#111" stroke-dasharray="2 1.500"/><path d="M44,279v10l3,-2l6,-3z" fill="#111"/>
<ellipse cx="24" cy="305" rx="6" ry="5" fill="#fff" stroke="#111"/><circle cx="22" cy="305" r="1" fill="#111"/><circle cx="25" cy="305" r="1" fill="#111"/><path d="M28,304V315L31,312L35,312Z" fill="#fff" stroke="#111"/>
<path d="M43,298v10l6,-5z" fill="#111"/><path d="M52,304l4,-2l4,2v5l-4,2l-4,-2z" fill="#ddd" stroke="#111"/><path d="M52,304l4,2l4,-2M56,306v5" stroke="#111" fill="none"/>
<rect x="19" y="326" width="14" height="11" fill="#ddd" stroke="#111"/><path d="M19,330q7,-3 14,2M23,326q2,6 -1,11M28,326q1,5 2,11M19,334q7,-3 14,0" stroke="#111" fill="none" stroke-width=".7"/>
<rect x="44" y="326" width="15" height="12" fill="url(#grad)" stroke="#555"/>
<path d="M20,360l2,-5l7,-8l3,3l-8,8z" fill="#fff" stroke="#111"/><path d="M27,349l6,-6q2,-1 3,1q1,2 -1,3l-5,5z" fill="#111"/>
<rect x="43" y="344" width="3" height="3" fill="#555"/><rect x="47" y="348" width="2" height="2" fill="#777"/><path d="M44,350h1M48,345h1M50,351h1M46,353h1" stroke="#888"/><circle cx="55" cy="356" r="3.500" fill="#ccc" stroke="#111"/>
<rect x="22" y="375" width="11" height="11" fill="#eee" stroke="#111" stroke-width="1.300"/><circle cx="27.500" cy="381" r="2.500" fill="#555"/><rect x="25" y="372" width="4" height="3" fill="#777" stroke="#111" stroke-width=".6"/><path d="M18,372h1M21,371h1M18,375h1M21,374h1" stroke="#333"/>
<path d="M43,373v12h16" fill="none" stroke="#111"/><rect x="46" y="377" width="3" height="8" fill="#555" stroke="#111" stroke-width=".6"/><rect x="50.500" y="379" width="3" height="6" fill="#777" stroke="#111" stroke-width=".6"/><rect x="55" y="374" width="3" height="11" fill="#333"/>
<rect x="21" y="398" width="11" height="11" fill="#f6f6f6" stroke="#111"/><path d="M26.500,394v3M26.500,410v3M17,403.500h3M33,403.500h3M19,396h2M32,396h2M19,411h2M32,411h2" stroke="#111"/>
<path d="M43,412l6,-7l4,3l-7,6zM48,406l8,-9l3,1l-6,10z" fill="#fff" stroke="#111"/><path d="M52,400l5,-4l2,1l-5,6z" fill="#333"/>
<path d="M22,430q-4,-5 -5,-9q1,-1 3,1l1,2l0,-8q2,-1 2,1l1,5l0,-7q2,-1 2,1l1,6l1,-6q2,0 2,1l0,7l2,-4q2,0 1,2l-1,8l-2,2z" fill="#fff" stroke="#111" stroke-width=".8"/>
<circle cx="48" cy="421" r="5" fill="#eee" stroke="#111" stroke-width="1.400"/><path d="M52,425l6,6" stroke="#111" stroke-width="2.400"/>
<!-- fill/stroke -->
<rect x="31.500" y="455.500" width="27" height="27" fill="#e2066f" stroke="#111"/>
<rect x="38.500" y="462.500" width="12" height="13" fill="#bbb" stroke="#111"/>
<rect x="18.500" y="442.500" width="27" height="27" fill="#fff" stroke="#111" stroke-width="1.300"/>
<path d="M19,469L45,443" stroke="#c4122c" stroke-width="1.400"/>
<path d="M50,446q5,-2 7,2M58,451q-2,3 -6,1" fill="none" stroke="#333" stroke-width="1.200"/><path d="M50,443v5h3zM59,454l-3,-4h3z" fill="#333"/>
<rect x="22.500" y="476.500" width="6" height="6" fill="#111"/><rect x="19.500" y="473.500" width="6" height="6" fill="#fff" stroke="#111"/>
<rect x="13.500" y="492.500" width="50" height="16" fill="#e4e4e4" stroke="#8c8c8c"/>
<rect x="46" y="493" width="17" height="15" fill="#8e8e8e"/>
<path d="M30.500,492V508M46.500,492V508" stroke="#9a9a9a"/>
<rect x="18" y="495" width="9" height="10" fill="#000"/>
<rect x="33" y="495" width="10" height="10" fill="url(#grad)" stroke="#222" stroke-width=".6"/>
<rect x="50" y="495" width="10" height="10" fill="#fff" stroke="#222"/><path d="M50,505l10,-10" stroke="#c4122c" stroke-width="1.500"/>
<rect x="13.500" y="512.500" width="50" height="16" fill="#e8e8e8" stroke="#8c8c8c"/>
<rect x="14" y="513" width="17" height="15" fill="#999"/>
<path d="M30.500,512V528M46.500,512V528" stroke="#9a9a9a"/>
<circle cx="20.500" cy="519" r="4.500" fill="#ddd" stroke="#111"/><rect x="21" y="519" width="6" height="6" fill="#ddd" stroke="#111"/>
<circle cx="37" cy="519" r="4.500" fill="#eee" stroke="#111"/><rect x="38" y="519" width="6" height="6" fill="#eee" stroke="#111"/>
<circle cx="55" cy="520" r="4" fill="#ddd" stroke="#999"/><rect x="55" y="520" width="4" height="4" fill="#ccc"/>
<rect x="13.500" y="532.500" width="50" height="16" fill="#e8e8e8" stroke="#8c8c8c"/>
<rect x="28" y="538" width="13" height="10" fill="#fff" stroke="#333"/><rect x="37" y="534" width="12" height="10" fill="#fff" stroke="#111"/>

<!-- right dock -->
<rect x="1413" y="92" width="36" height="11" fill="url(#dk)"/>
<text x="1438" y="101" font-size="8" style="fill:#bbb">◂◂</text>
<rect x="1413" y="103" width="36" height="432" fill="#cfcfcf"/>
<rect x="1413" y="92" width="1" height="443" fill="#666"/>
<path d="M1414,177.500H1449M1414,281.500H1449M1414,385.500H1449M1414,450.500H1449" stroke="#555"/>
<path d="M1418,109.500h27M1418,183.500h27M1418,287.500h27M1418,391.500h27M1418,456.500h27" stroke="#9a9a9a" stroke-width="2" stroke-dasharray="1 1"/>
<ellipse cx="1432" cy="130" rx="10" ry="7" transform="rotate(-25 1432 130)" fill="#222"/><circle cx="1426" cy="132" r="1.700" fill="#ddd"/><circle cx="1430" cy="127" r="1.700" fill="#ddd"/><circle cx="1435" cy="125" r="1.500" fill="#ddd"/><circle cx="1431" cy="133" r="1.500" fill="#999"/><circle cx="1438" cy="128" r="1.500" fill="#777"/>
<path d="M1423,168V152q16,2 17,16z" fill="url(#grad2)" stroke="#111"/><path d="M1423,168l10,-12l7,12z" fill="#444"/>
<rect x="1424" y="197" width="16" height="13" fill="#333" stroke="#111"/><path d="M1429.500,197v13M1434.500,197v13M1424,201.500h16M1424,205.500h16" stroke="#ccc" stroke-width=".8"/>
<rect x="1428" y="233" width="8" height="9" fill="#fff" stroke="#111" stroke-width="1.500"/><path d="M1428,233l-3,-8M1432,233v-9M1436,233l3,-8" stroke="#111" stroke-width="1.800"/><circle cx="1425" cy="226" r="1.800" fill="#111"/><circle cx="1439" cy="227" r="1.800" fill="#111"/>
<circle cx="1432" cy="259" r="4" fill="#111"/><circle cx="1427" cy="265" r="4" fill="#111"/><circle cx="1437" cy="265" r="4" fill="#111"/><path d="M1431,264h2l2,7h-6z" fill="#111"/>
<path d="M1423,300.500h17" stroke="#666" stroke-dasharray="3 1"/><path d="M1423,305h17" stroke="#333" stroke-width="1.500"/><path d="M1423,309h17" stroke="#222" stroke-width="2"/><path d="M1423,313.500h17" stroke="#111" stroke-width="3"/>
<rect x="1423" y="332" width="17" height="12" fill="url(#grad)" stroke="#222"/>
<circle cx="1429" cy="364" r="6" fill="#333"/><circle cx="1433" cy="369" r="6" fill="#bbb" fill-opacity=".7" stroke="#222"/>
<circle cx="1432" cy="412" r="7.500" fill="none" stroke="#555" stroke-dasharray="1 1"/><circle cx="1432" cy="412" r="5.500" fill="#333"/>
<rect x="1427" y="435" width="13" height="13" fill="url(#grad2)" stroke="#333" stroke-width=".6"/><rect x="1424" y="441" width="6" height="6" fill="#fff" stroke="#111"/><rect x="1427" y="444" width="6" height="5" fill="none" stroke="#111"/>
<rect x="1417.500" y="462.500" width="28" height="27" rx="1" fill="#ababab" stroke="#666"/>
<path d="M1432,476l10,5l-10,5l-10,-5z" fill="#222"/><path d="M1432,471l10,5l-10,5l-10,-5z" fill="#555"/>
<path d="M1432,467l9,5l-9,5l-9,-5z" fill="#eee" stroke="#888" stroke-width=".5"/>
<path d="M1422,506h8l3,3v9h-11z" fill="#eee" stroke="#222"/><path d="M1428,512h6l3,3v8h-9z" fill="#ddd" stroke="#222"/>

<!-- layers panel -->
<rect x="1198" y="467" width="215" height="140" fill="#c4c4c4" stroke="#555"/>
<rect x="1199" y="468" width="214" height="4" fill="#3f3f3f"/>
<rect x="1199" y="472" width="214" height="15" fill="#848484"/>
<rect x="1199" y="472" width="48" height="16" fill="#cdcdcd"/>
<rect x="1247" y="472" width="71" height="15" fill="#989898"/>
<path d="M1247.500,472v15M1318,472v15" stroke="#555"/>
<text x="1206" y="483" font-size="10" style="fill:#222" textLength="35" lengthAdjust="spacingAndGlyphs">LAYERS</text>
<text x="1254" y="483" font-size="10" style="fill:#222" textLength="57" lengthAdjust="spacingAndGlyphs">ARTBOARDS</text>
<path d="M1373,476v7l4,-3.500zM1378,476v7l4,-3.500z" fill="#333"/><path d="M1389.500,475v8" stroke="#555"/>
<path d="M1395,478h5l-2.500,3z" fill="#222"/><path d="M1401,476h8M1401,478.500h8M1401,481h8M1401,483.500h8" stroke="#222" stroke-width=".8"/>
<rect x="1199" y="488" width="214" height="1" fill="#555"/>
<rect x="1247" y="489" width="150" height="101" fill="#fff"/>
<rect x="1199" y="489" width="47" height="101" fill="#cfcfcf"/>
<rect x="1246" y="489" width="1" height="101" fill="#333"/>
<rect x="1247" y="490" width="14" height="20" fill="#d8d8d8"/>
<rect x="1261" y="490" width="136" height="20" fill="#a9c8f6"/>
<path d="M1249,496h10l-5,9z" fill="#666"/>
<rect x="1263.500" y="491.500" width="16" height="17" fill="#fff" stroke="#111"/><rect x="1265" y="498" width="3" height="3" fill="#e2066f"/><circle cx="1274" cy="500" r="1.500" fill="#555"/>
<path d="M1392,490h5v4z" fill="#111"/>
<text x="1283" y="502" font-size="10" font-weight="700" textLength="34" lengthAdjust="spacingAndGlyphs">Layer 1</text>
<use href="#eye" transform="translate(1203,490)"/>
<use href="#eye" transform="translate(1203,510)"/>
<use href="#eye" transform="translate(1203,530)"/>
<use href="#eye" transform="translate(1203,550)"/>
<use href="#eye" transform="translate(1203,570)"/>
<path d="M1199,509.500h47M1199,529.500h47M1199,549.500h47M1199,569.500h47M1276,509.500h121M1276,529.500h121M1276,549.500h121M1276,569.500h121" stroke="#555" stroke-width=".8"/>
<use href="#pth" transform="translate(1278.500,512.500)"/><use href="#pth" transform="translate(1278.500,532.500)"/><use href="#pth" transform="translate(1278.500,552.500)"/><use href="#pth" transform="translate(1278.500,572.500)"/>
<text x="1299" y="522" font-size="9.500" textLength="32" lengthAdjust="spacingAndGlyphs">&lt;Path&gt;</text>
<text x="1299" y="542" font-size="9.500" textLength="32" lengthAdjust="spacingAndGlyphs">&lt;Path&gt;</text>
<text x="1299" y="562" font-size="9.500" textLength="32" lengthAdjust="spacingAndGlyphs">&lt;Path&gt;</text>
<text x="1299" y="582" font-size="9.500" textLength="32" lengthAdjust="spacingAndGlyphs">&lt;Path&gt;</text>
<g fill="none" stroke="#222" stroke-width="1.100"><circle cx="1377.500" cy="499.500" r="4"/><circle cx="1377.500" cy="519.500" r="4"/><circle cx="1377.500" cy="539.500" r="4"/><circle cx="1377.500" cy="559.500" r="4"/><circle cx="1377.500" cy="579.500" r="4"/></g>
<rect x="1397" y="489" width="16" height="101" fill="url(#sb)"/>
<rect x="1397.500" y="496" width="13" height="21" rx="6" fill="url(#blt)" stroke="#1f4a90" stroke-width=".7"/><rect x="1400" y="498" width="8" height="6" rx="3" fill="#b8d6f6"/>
<rect x="1397" y="556" width="16" height="34" fill="#e4e4e4"/>
<path d="M1397,556q8,8 16,0" fill="none" stroke="#aaa"/>
<path d="M1400,569l4,-5l4,5zM1400,578l4,5l4,-5z" fill="#333"/><path d="M1397,573.500h16" stroke="#aaa"/>
<rect x="1199" y="590" width="214" height="1" fill="#666"/>
<rect x="1199" y="591" width="214" height="15" fill="#d2d2d2"/>
<text x="1210" y="600" font-size="9.500" style="fill:#111" textLength="36" lengthAdjust="spacingAndGlyphs">2 Layers</text>
<path d="M1272.500,591v15M1303.500,591v15M1334.500,591v15M1365.500,591v15M1396.500,591v15" stroke="#666"/>
<rect x="1283" y="593" width="7" height="7" fill="none" stroke="#555" stroke-dasharray="1 1"/><circle cx="1290" cy="599" r="4.500" fill="#888" stroke="#111"/>
<path d="M1312,596h6M1316,594l2,2l-2,2" fill="none" stroke="#111"/><rect x="1319" y="594" width="7" height="8" fill="#ddd" stroke="#111"/>
<rect x="1346" y="594" width="8" height="8" fill="#eee" stroke="#111"/><rect x="1350" y="598" width="3" height="3" fill="#555"/>
<rect x="1377" y="596" width="7" height="7" fill="#fff" stroke="#111"/><path d="M1376,595h9M1379,593h3" stroke="#111"/><path d="M1379,597v5M1381,597v5" stroke="#555"/>
<path d="M1410,595v9M1407,598v6M1404,601v3" stroke="#666" stroke-dasharray="1 1"/>
</svg>
</body></html>
